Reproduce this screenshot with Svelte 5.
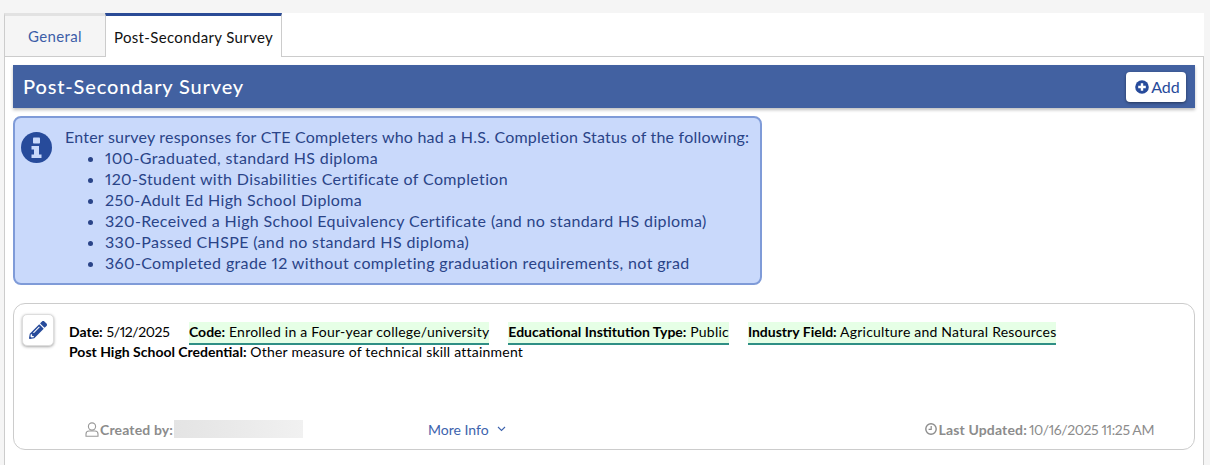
<script lang="ts">
  const completions = [
    '100-Graduated, standard HS diploma',
    '120-Student with Disabilities Certificate of Completion',
    '250-Adult Ed High School Diploma',
    '320-Received a High School Equivalency Certificate (and no standard HS diploma)',
    '330-Passed CHSPE (and no standard HS diploma)',
    '360-Completed grade 12 without completing graduation requirements, not grad',
  ];

  const highlighted = [
    { label: 'Code:', value: 'Enrolled in a Four-year college/university' },
    { label: 'Educational Institution Type:', value: 'Public' },
    { label: 'Industry Field:', value: 'Agriculture and Natural Resources' },
  ];
</script>

<div class="page">
  <div class="tabs">
    <button class="tab">General</button>
    <button class="tab active">Post-Secondary Survey</button>
  </div>

  <div class="content">
    <div class="header">
      <h1>Post-Secondary Survey</h1>
      <button class="add">
        <svg width="14" height="14" viewBox="0 0 14 14" aria-hidden="true">
          <circle cx="7" cy="7" r="6.8" fill="#274b9b" />
          <path d="M7 3.2v7.6M3.2 7h7.6" stroke="#fff" stroke-width="2.4" />
        </svg>
        <span>Add</span>
      </button>
    </div>

    <div class="notice">
      <svg class="info" width="31" height="31" viewBox="0 0 31 31" aria-hidden="true">
        <circle cx="15.5" cy="15.5" r="15.5" fill="#274b9b" />
        <rect x="12" y="5.5" width="7" height="6" rx="0.8" fill="#c9d9fb" />
        <path d="M10.5 14h7.5v8.5h2.5V26h-10v-3.5H13V17.5h-2.5z" fill="#c9d9fb" />
      </svg>
      <div class="notice-text">
        <div class="lead">Enter survey responses for CTE Completers who had a H.S. Completion Status of the following:</div>
        <ul>
          {#each completions as item}
            <li>{item}</li>
          {/each}
        </ul>
      </div>
    </div>

    <div class="card">
      <div class="card-top">
        <button class="edit" aria-label="Edit">
          <svg width="18" height="18" viewBox="0 0 512 512" aria-hidden="true">
            <path fill="#274b9b" d="M497.9 142.1l-46.1 46.1c-4.7 4.7-12.3 4.7-17 0l-111-111c-4.7-4.7-4.7-12.3 0-17l46.1-46.1c18.7-18.7 49.1-18.7 67.9 0l60.1 60.1c18.8 18.7 18.8 49.1 0 67.9zM284.2 99.8L21.6 362.4.4 483.9c-2.9 16.4 11.4 30.6 27.8 27.8l121.5-21.3 262.6-262.6c4.7-4.7 4.7-12.3 0-17l-111-111c-4.8-4.7-12.4-4.7-17.1 0zM124.1 339.9c-5.5-5.5-5.5-14.3 0-19.8l154-154c5.5-5.5 14.3-5.5 19.8 0s5.5 14.3 0 19.8l-154 154c-5.5 5.5-14.3 5.5-19.8 0zM88 424h48v36.3l-64.5 11.3-31.1-31.1L51.7 376H88v48z" />
          </svg>
        </button>
        <div class="fields">
          <div class="field-row">
            <span class="field date"><b>Date:</b> <span class="num">5/12/2025</span></span>
            {#each highlighted as f}
              <span class="field mark"><b>{f.label}</b> {f.value}</span>
            {/each}
          </div>
          <div class="field-row">
            <span class="field"><b>Post High School Credential:</b> Other measure of technical skill attainment</span>
          </div>
        </div>
      </div>

      <div class="card-foot">
        <div class="created">
          <svg width="14" height="15" viewBox="0 0 14 15" aria-hidden="true">
            <circle cx="7" cy="4.5" r="3.6" fill="none" stroke="#999" stroke-width="1.1" />
            <path d="M1 14.2V12a3 3 0 0 1 3-3h6a3 3 0 0 1 3 3v2.2z" fill="none" stroke="#999" stroke-width="1.1" />
          </svg>
          <b>Created by:</b>
          <span class="redacted"></span>
        </div>
        <button class="more">
          More Info
          <svg width="9" height="6" viewBox="0 0 9 6" aria-hidden="true">
            <path d="M1 1l3.5 3.5L8 1" fill="none" stroke="#3d63ad" stroke-width="1.1" />
          </svg>
        </button>
        <div class="updated">
          <svg width="12" height="12" viewBox="0 0 12 12" aria-hidden="true">
            <circle cx="6" cy="6" r="5.2" fill="none" stroke="#8c8c8c" stroke-width="1.4" />
            <path d="M6.2 3v3.4H3.6" fill="none" stroke="#8c8c8c" stroke-width="1.2" />
          </svg>
          <b>Last Updated:</b><span class="num">10/16/2025 11:25 AM</span>
        </div>
      </div>
    </div>
  </div>
</div>

<style>
  :global(body) {
    background: #f5f5f5;
    font-family: "Lato", "Liberation Sans", sans-serif;
    font-size: 15px;
    font-variant-numeric: proportional-nums;
    color: #000;
  }
  button {
    font: inherit;
    cursor: pointer;
  }
  .page {
    margin: 13px 6px 0 4px;
    background: #fff;
  }
  .tabs {
    position: relative;
    z-index: 1;
    display: flex;
    height: 44px;
    box-sizing: border-box;
  }
  .tab {
    box-sizing: border-box;
    height: 44px;
    width: 101px;
    background: #f5f5f5;
    border: 1px solid #ccc;
    border-top: 3px solid #e2e2e2;
    border-right: none;
    color: #3c5ea8;
    padding: 0;
    letter-spacing: 0.35px;
  }
  .tab.active {
    width: 177px;
    background: #fff;
    border-top: 3px solid #2a4b96;
    border-left: 1px solid #ccc;
    border-right: 1px solid #ccc;
    border-bottom: none;
    color: #111;
  }
  .content {
    border: 1px solid #ccc;
    border-bottom: none;
    margin-top: -1px;
    padding: 8px 8px 0;
    height: 409px;
    box-sizing: border-box;
  }
  .header {
    height: 43px;
    background: #4261a1;
    box-shadow: 0 2px 3px rgba(0, 0, 0, 0.25);
    display: flex;
    align-items: center;
    justify-content: space-between;
    padding: 0 9px 0 10px;
  }
  h1 {
    margin: 0;
    color: #fff;
    font-size: 20px;
    font-weight: 500;
    letter-spacing: 0.85px;
    position: relative;
    top: -1px;
  }
  .add {
    box-sizing: border-box;
    width: 60px;
    height: 30px;
    background: #fff;
    border: none;
    border-radius: 4px;
    box-shadow: 0 1px 3px rgba(0, 0, 0, 0.45);
    color: #274b9b;
    display: flex;
    align-items: center;
    justify-content: center;
    gap: 2px;
    padding: 0 0 0 3px;
    font-size: 16px;
  }
  .notice {
    box-sizing: border-box;
    width: 749px;
    height: 169px;
    margin-top: 8px;
    background: #c9d9fb;
    border: 2px solid #7f9bd8;
    border-radius: 8px;
    display: flex;
    gap: 13px;
    padding: 9px 6px;
    color: #2a4488;
    font-size: 16px;
    letter-spacing: 0.22px;
  }
  .info {
    flex: none;
    margin-top: 5px;
  }
  .notice-text {
    white-space: nowrap;
  }
  .lead {
    line-height: 20px;
  }
  ul {
    margin: 0;
    padding-left: 40px;
  }
  li {
    line-height: 21px;
    letter-spacing: 0.36px;
  }
  .card {
    box-sizing: border-box;
    height: 147px;
    margin-top: 18px;
    border: 1px solid #ccc;
    border-radius: 12px;
    display: flex;
    flex-direction: column;
    justify-content: space-between;
    padding: 10px 8px 10px;
  }
  .card-top {
    display: flex;
    gap: 15px;
  }
  .edit {
    width: 32px;
    height: 32px;
    flex: none;
    background: #fff;
    border: 1px solid #ddd;
    border-radius: 5px;
    box-shadow: 0 1px 3px rgba(0, 0, 0, 0.35);
    display: flex;
    align-items: center;
    justify-content: center;
    padding: 0;
  }
  .fields {
    margin-top: 8px;
    font-size: 14px;
    letter-spacing: 0.22px;
  }
  .fields b {
    letter-spacing: 0;
  }
  .field-row {
    display: flex;
    align-items: flex-start;
    gap: 19px;
    height: 20px;
    line-height: 20px;
    white-space: pre;
  }
  .date {
    width: 101px;
  }
  .num {
    letter-spacing: -0.4px;
  }
  .mark {
    background: #e6ffe6;
    border-bottom: 2px solid #2f8f85;
    height: 23px;
    box-sizing: border-box;
  }
  .card-foot {
    display: grid;
    grid-template-columns: 343px 1fr auto;
    align-items: center;
    padding-left: 63px;
    padding-right: 32px;
    height: 20px;
    color: #8c8c8c;
    font-size: 14px;
  }
  .card-foot b {
    letter-spacing: 0.15px;
  }
  .created,
  .updated {
    display: flex;
    align-items: center;
    gap: 2px;
  }
  .created {
    gap: 1px;
  }
  .updated {
    gap: 2px;
  }
  .redacted {
    display: inline-block;
    width: 129px;
    height: 18px;
    background: linear-gradient(90deg, #e4e4e4, #eaeaea 50%, #f1f1f1);
  }
  .more {
    background: none;
    border: none;
    color: #3d63ad;
    padding: 0;
    justify-self: start;
    display: flex;
    align-items: center;
    gap: 8px;
  }
</style>
